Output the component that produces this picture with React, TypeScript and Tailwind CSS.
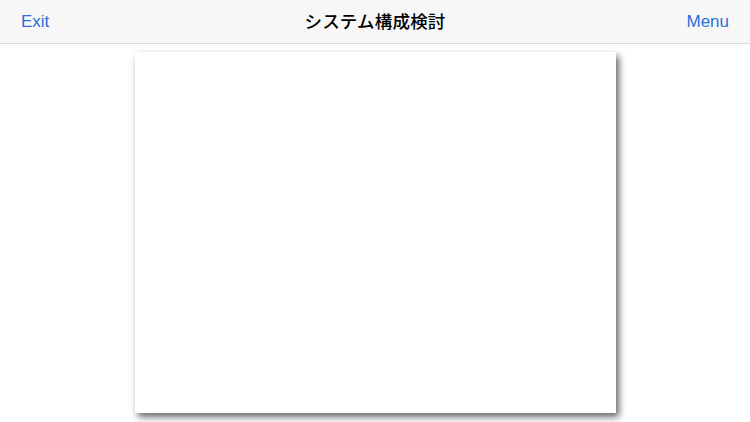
export default function App() {
  return (
    <div className="w-[750px] h-[422px] bg-white overflow-hidden font-['Noto_Sans_CJK_JP','Liberation_Sans',sans-serif]">
      {/* Navigation bar */}
      <div className="h-[44px] bg-[#f7f7f7] border-b border-[#d9d9d9] grid grid-cols-[1fr_auto_1fr] items-center px-[21px]">
        <div className="flex">
          <button className="text-[17px] text-[#2a6fdc] font-['Liberation_Sans',sans-serif]">Exit</button>
        </div>
        <div className="text-[17.5px] font-medium text-black tracking-[0.2px]">システム構成検討</div>
        <div className="flex justify-end">
          <button className="text-[17px] text-[#2a6fdc] font-['Liberation_Sans',sans-serif]">Menu</button>
        </div>
      </div>

      {/* Canvas */}
      <div className="flex justify-center pt-[8px]">
        <div className="w-[481px] h-[361px] bg-white shadow-[3px_4px_7px_rgba(0,0,0,0.6)]" />
      </div>
    </div>
  );
}
